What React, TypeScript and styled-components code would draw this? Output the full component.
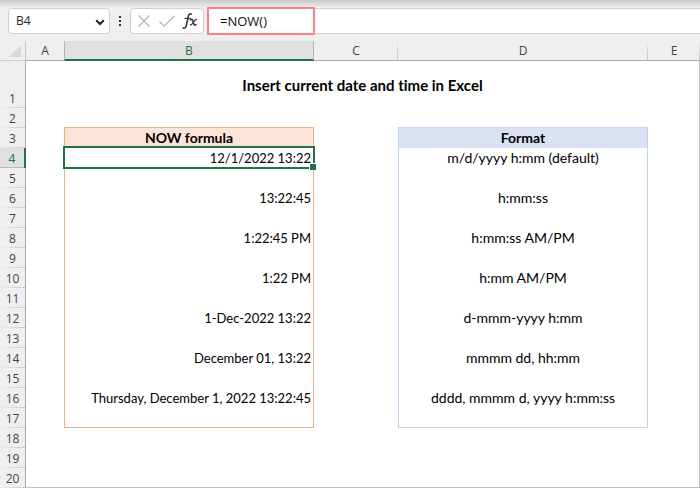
import React from "react";
import styled, { createGlobalStyle, css } from "styled-components";

const green = "#217346";

const GlobalStyle = createGlobalStyle`
  * { box-sizing: border-box; }
  body { margin: 0; background: #efefef; }
`;

const Workbook = styled.main`
  font-family: Lato, "Liberation Sans", sans-serif;
  font-size: 13px;
  font-variant-ligatures: none;
  color: #000;
  background: #efefef;
`;

const FormulaBar = styled.header`
  display: flex;
  align-items: center;
  height: 41px;
  padding: 7px 0 7px 8px;
  background: linear-gradient(#c9c9c9 0, #d4d4d4 2px, #efefef 8px);
  font-family: "Open Sans", "Noto Sans", sans-serif;
  font-size: 12px;
`;

const NameBox = styled.div`
  position: relative;
  width: 102px;
  height: 26px;
`;

const NameSelect = styled.select`
  appearance: none;
  width: 100%;
  height: 100%;
  padding: 0 24px 0 7px;
  border: 1px solid #d0d0d0;
  border-radius: 4px;
  background: #fff;
  color: #262626;
  font: inherit;
`;

const Chevron = styled.svg`
  position: absolute;
  right: 5px;
  top: 11px;
  pointer-events: none;
`;

const Dots = styled.svg`
  margin: 0 8px 0 8px;
`;

const Tools = styled.div`
  display: flex;
  align-items: center;
  width: 74px;
  height: 26px;
  padding: 0 1px 0 1px;
  margin-right: 3px;
  border: 1px solid #d0d0d0;
  border-radius: 4px;
  background: #fff;
`;

const ToolButton = styled.button`
  display: flex;
  flex: 1;
  align-items: center;
  justify-content: center;
  height: 24px;
  padding: 0;
  border: 0;
  background: none;
`;

const FormulaField = styled.div`
  position: relative;
  flex: 1;
  height: 26px;
`;

const FormulaInput = styled.input`
  width: 100%;
  height: 100%;
  padding: 0 12px 0 13px;
  border: solid #d0d0d0;
  border-width: 1px 0;
  border-radius: 0;
  outline: 0;
  background: #fff;
  color: #111;
  font: inherit;
  font-size: 13px;
`;

const Highlight = styled.span`
  position: absolute;
  top: -1px;
  left: 0;
  width: 108px;
  height: 28px;
  border: 2px solid #fc8184;
  pointer-events: none;
`;

const Sheet = styled.table`
  width: 100%;
  table-layout: fixed;
  border-collapse: separate;
  border-spacing: 0;
`;

const Column = styled.col<{ $width?: number }>`
  ${(p) => p.$width && `width: ${p.$width}px;`}
`;

const HeadFont = css`
  font-family: "Open Sans", "Noto Sans", sans-serif;
  font-size: 12px;
  font-weight: 400;
  line-height: 18px;
  color: #444;
`;

const Corner = styled.th`
  height: 20px;
  padding: 0 4px 3px 0;
  border-bottom: 1px solid #d0d0d0;
  border-right: 1px solid #c4c4c4;
  text-align: right;
  vertical-align: bottom;
  line-height: 0;
`;

const ColumnHead = styled.th<{ $active?: boolean; $divided?: boolean }>`
  ${HeadFont}
  height: 20px;
  padding: 0;
  border-bottom: 1px solid #ababab;
  background: ${(p) =>
    p.$divided
      ? "linear-gradient(#efefef, #bdbdbd) right / 1px 100% no-repeat"
      : "#efefef"};
  ${(p) =>
    p.$active &&
    css`
      border-bottom: 2px solid ${green};
      border-left: 1px solid #b4b4b4;
      border-right: 1px solid #b4b4b4;
      background: #e0e0e0;
      color: ${green};
      line-height: 17px;
    `}
`;

const RowHead = styled.th<{ $active?: boolean; $tall?: boolean }>`
  ${HeadFont}
  height: ${(p) => (p.$tall ? 47 : 20)}px;
  padding: 0;
  border-right: 1px solid #ababab;
  vertical-align: bottom;
  background: linear-gradient(90deg, #efefef, #c9c9c9) bottom / 100% 1px no-repeat;
  ${(p) =>
    p.$active &&
    css`
      border-right: 2px solid ${green};
      background: linear-gradient(#b8b8b8, #b8b8b8) bottom / 100% 1px no-repeat, #e0e0e0;
      color: ${green};
    `}
`;

type Tone = "orange" | "blue";
const edge = { orange: "#f4b084", blue: "#bdd7ee" };
const fill = { orange: "#fce4d6", blue: "#d9e1f2" };

const Cell = styled.td<{
  $tone?: Tone;
  $sides?: boolean;
  $bottom?: boolean;
  $filled?: boolean;
  $last?: boolean;
  $end?: boolean;
}>`
  position: relative;
  height: 20px;
  padding: 0 2px;
  background: ${(p) => (p.$filled && p.$tone ? fill[p.$tone] : "#fff")};
  border: 0 solid ${(p) => (p.$tone ? edge[p.$tone] : "#c0c0c0")};
  border-left-width: ${(p) => (p.$sides ? 1 : 0)}px;
  border-right-width: ${(p) => (p.$sides || p.$end ? 1 : 0)}px;
  border-bottom-width: ${(p) => (p.$bottom || p.$last ? 1 : 0)}px;
  ${(p) => p.$last && "border-bottom-color: #c0c0c0;"}
  text-align: ${(p) => (p.$tone === "orange" && !p.$filled ? "right" : "center")};
  font-size: ${(p) => (p.$filled || p.$tone === "blue" ? 14 : 13)}px;
  font-weight: ${(p) => (p.$filled ? 700 : 400)};
  line-height: 18px;
  white-space: nowrap;
`;

const TitleCell = styled.td`
  padding: 0;
  border-right: 1px solid #c0c0c0;
  background: #fff;
  font-size: 15px;
  font-weight: 700;
  line-height: 20px;
  text-align: center;
`;

const Selection = styled.span`
  position: absolute;
  inset: -2px -2px -1px -2px;
  z-index: 1;
  border: 2px solid ${green};
  pointer-events: none;

  &::after {
    content: "";
    position: absolute;
    right: -3px;
    bottom: -3px;
    width: 6px;
    height: 6px;
    border: solid #fff;
    border-width: 1px 0 0 1px;
    background: ${green};
  }
`;

const formulas: Record<number, [string, string]> = {
  3: ["NOW formula", "Format"],
  4: ["12/1/2022 13:22", "m/d/yyyy h:mm (default)"],
  6: ["13:22:45", "h:mm:ss"],
  8: ["1:22:45 PM", "h:mm:ss AM/PM"],
  10: ["1:22 PM", "h:mm AM/PM"],
  12: ["1-Dec-2022 13:22", "d-mmm-yyyy h:mm"],
  14: ["December 01, 13:22", "mmmm dd, hh:mm"],
  16: ["Thursday, December 1, 2022 13:22:45", "dddd, mmmm d, yyyy h:mm:ss"],
};

const rows = Array.from({ length: 19 }, (_, i) => i + 2);

function Row({ n }: { n: number }) {
  const [value, format] = formulas[n] ?? ["", ""];
  const boxed = {
    $sides: n > 2 && n < 18,
    $bottom: n === 2 || n === 17,
    $filled: n === 3,
    $last: n === 20,
  };
  return (
    <tr>
      <RowHead scope="row" $active={n === 4}>{n}</RowHead>
      <Cell $last={n === 20} />
      <Cell $tone="orange" {...boxed}>
        {value}
        {n === 4 && <Selection />}
      </Cell>
      <Cell $last={n === 20} />
      <Cell $tone="blue" {...boxed}>{format}</Cell>
      <Cell $last={n === 20} $end />
    </tr>
  );
}

export default function App() {
  return (
    <Workbook>
      <GlobalStyle />
      <FormulaBar>
        <NameBox>
          <NameSelect aria-label="Name box" defaultValue="B4">
            <option>B4</option>
          </NameSelect>
          <Chevron width="10" height="7" viewBox="0 0 10 7" fill="none" stroke="#222" strokeWidth="2">
            <path d="M1.2 1.2 5 5l3.8-3.8" />
          </Chevron>
        </NameBox>
        <Dots width="4" height="12" viewBox="0 0 4 12" fill="#333">
          <path d="M1 1h2v2H1zM1 5h2v2H1zM1 9h2v2H1z" />
        </Dots>
        <Tools>
          <ToolButton aria-label="Cancel">
            <svg width="14" height="14" viewBox="0 0 14 14" fill="none" stroke="#b4b4b4" strokeWidth="1.2">
              <path d="m1.5 1.5 11 11m0-11-11 11" />
            </svg>
          </ToolButton>
          <ToolButton aria-label="Enter">
            <svg width="18" height="14" viewBox="0 0 18 14" fill="none" stroke="#b4b4b4" strokeWidth="1.3">
              <path d="m1.5 7.5 4.8 4.7L16.5 1.8" />
            </svg>
          </ToolButton>
          <ToolButton aria-label="Insert function">
            <svg width="16" height="18" viewBox="0 0 16 18" fill="none" stroke="#333" strokeLinecap="round">
              <path d="M9.4 2.2C7.6 1 6.6 2.4 6.1 5L4.5 13c-.5 2.5-1.6 3.9-3.5 3" strokeWidth="1.5" />
              <path d="M3 6.4h5" strokeWidth="1.1" />
              <path d="M8.4 7.9c1.3-1.3 2-.4 2.5 1.3l.8 2.6c.5 1.7 1.3 1.9 2.4.7" strokeWidth="1.5" />
              <path d="M14.6 7.4c-1.1-.2-1.9.9-3.1 2.8-1.3 2-2 3-3.3 2.7" strokeWidth="1.1" />
            </svg>
          </ToolButton>
        </Tools>
        <FormulaField>
          <FormulaInput aria-label="Formula" defaultValue="=NOW()" />
          <Highlight />
        </FormulaField>
      </FormulaBar>
      <Sheet>
        <colgroup>
          <Column $width={26} />
          <Column $width={38} />
          <Column $width={250} />
          <Column $width={84} />
          <Column $width={250} />
          <Column />
        </colgroup>
        <thead>
          <tr>
            <Corner aria-label="Select all">
              <svg width="12" height="12" viewBox="0 0 12 12" fill="#d8d8d8">
                <path d="M12 0v12H0z" />
              </svg>
            </Corner>
            <ColumnHead scope="col">A</ColumnHead>
            <ColumnHead scope="col" $active>B</ColumnHead>
            <ColumnHead scope="col" $divided>C</ColumnHead>
            <ColumnHead scope="col" $divided>D</ColumnHead>
            <ColumnHead scope="col" $divided>E</ColumnHead>
          </tr>
        </thead>
        <tbody>
          <tr>
            <RowHead scope="row" $tall>1</RowHead>
            <TitleCell colSpan={5}>Insert current date and time in Excel</TitleCell>
          </tr>
          {rows.map((n) => (
            <Row key={n} n={n} />
          ))}
        </tbody>
      </Sheet>
    </Workbook>
  );
}
